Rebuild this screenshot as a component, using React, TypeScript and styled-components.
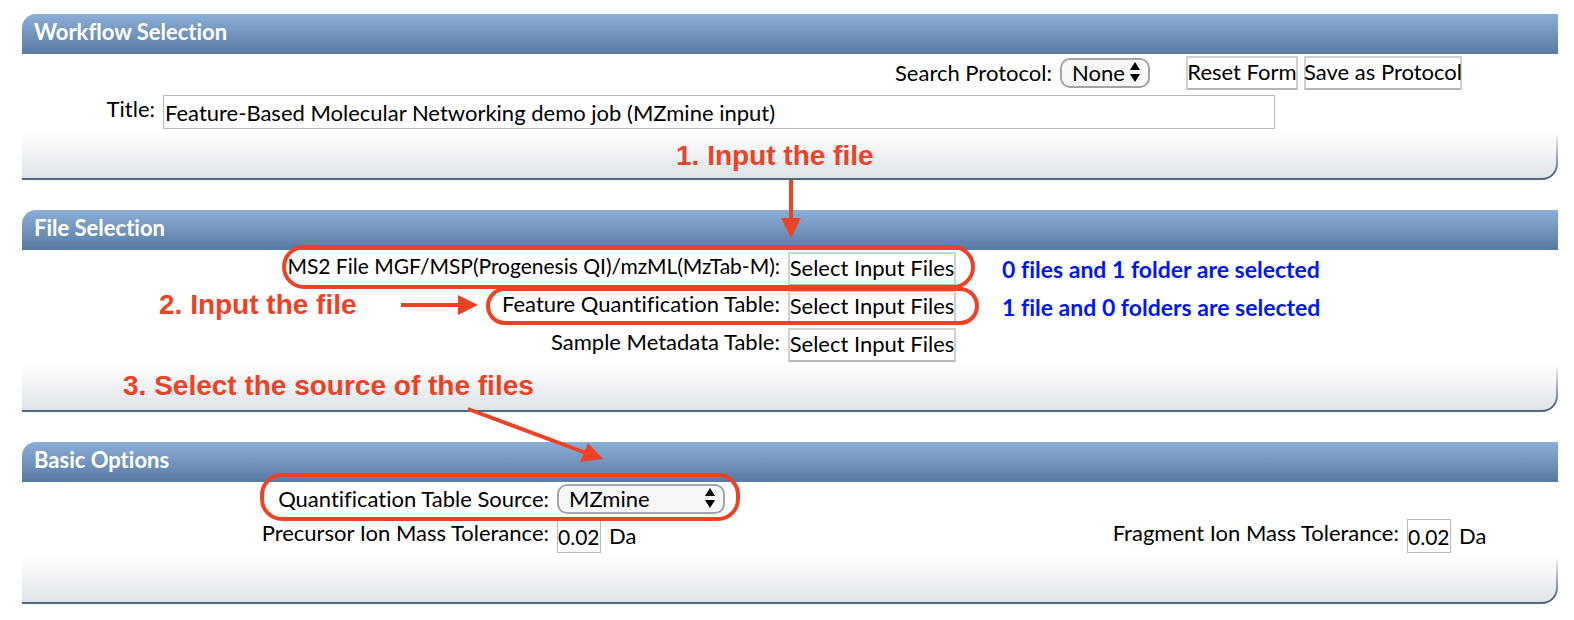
import React from "react";
import styled, { createGlobalStyle, css } from "styled-components";

const GlobalStyle = createGlobalStyle`
  *, *::before, *::after { box-sizing: border-box; }
  body {
    margin: 0;
    background: #fff;
    color: #000;
    font: 22px/28px "Trebuchet MS", Lato, "Open Sans", sans-serif;
    font-variant-ligatures: none;
  }
`;

const red = "#ee4226";

const Page = styled.main`
  display: flex;
  flex-direction: column;
  gap: 30px;
  padding: 14px 16px 16px 22px;
`;

const Panel = styled.section`
  display: flex;
  flex-direction: column;
`;

const PanelTitle = styled.h2`
  margin: 0;
  height: 40px;
  padding: 4px 12px 8px;
  border-top-left-radius: 14px;
  background: linear-gradient(#8cafd7, #597aa3);
  color: #fff;
  font-size: 22px;
  line-height: 28px;
  font-weight: 700;
`;

const PanelFoot = styled.div`
  height: 48px;
  border: 0 solid transparent;
  border-width: 0 2px 2px 0;
  border-bottom-right-radius: 16px;
  background:
    linear-gradient(#fff, #dfe4e9) padding-box,
    linear-gradient(#fff, #4f6983 90%) border-box;
`;

const Toolbar = styled.div`
  display: flex;
  align-items: center;
  justify-content: flex-end;
  gap: 8px;
  height: 38px;
  padding-right: 96px;
`;

const ToolbarButtons = styled.div`
  display: flex;
  gap: 6px;
  margin-left: 28px;
`;

const TitleRow = styled.div`
  display: grid;
  grid-template-columns: 133px minmax(0, 1fr);
  column-gap: 8px;
  align-items: center;
  height: 40px;
  padding-right: 283px;
`;

const FileRow = styled.div`
  display: grid;
  grid-template-columns: minmax(0, 758fr) minmax(0, 770fr);
  column-gap: 8px;
  align-items: center;
  height: 38px;
`;

const OptionRow = styled.div<{ $height: number }>`
  display: grid;
  grid-template-columns: minmax(0, 527fr) minmax(0, 180fr) minmax(0, 654fr) minmax(0, 151fr);
  column-gap: 8px;
  align-items: center;
  height: ${(p) => p.$height}px;
`;

const Label = styled.label<{ $raised?: boolean; $long?: boolean }>`
  display: flex;
  justify-content: flex-end;
  white-space: nowrap;
  ${(p) => p.$raised && css`padding-bottom: 6px;`}
  ${(p) => p.$long && css`font-size: 21px;`}
`;

const Cell = styled.div`
  position: relative;
  display: flex;
  align-items: center;
  gap: 8px;
`;

const Button = styled.button<{ $width: number }>`
  width: ${(p) => p.$width}px;
  height: 34px;
  padding: 0 0 2px;
  border: 2px solid #d0d0d0;
  border-bottom-color: #b6b6b6;
  background: #fff;
  color: #000;
  font: inherit;
  font-variant-ligatures: none;
  white-space: nowrap;
  display: flex;
  align-items: center;
  justify-content: center;
`;

const TextInput = styled.input`
  width: 100%;
  height: 34px;
  padding: 0 1px;
  border: 1px solid #bbb;
  background: #fff;
  color: #000;
  font: inherit;
  font-variant-ligatures: none;
`;

const ShortInput = styled(TextInput)`
  width: 44px;
  padding: 0;
  font-size: 21px;
`;

const SelectBox = styled.span<{ $width: number }>`
  position: relative;
  display: flex;
  width: ${(p) => p.$width}px;
`;

const SelectInput = styled.select`
  appearance: none;
  width: 100%;
  height: 30px;
  padding: 0 10px;
  border: 2px solid #a5a5a5;
  border-radius: 10px;
  background: #f7f7f7;
  color: #000;
  font: inherit;
  line-height: 26px;
`;

const SelectArrows = styled.svg`
  position: absolute;
  top: 4px;
  right: 10px;
  pointer-events: none;
`;

const Status = styled.strong`
  margin-left: 38px;
  color: #0018f5;
  font-size: 23px;
  white-space: nowrap;
`;

/* Callouts lie over the form and hang from the control they explain. */
const Ring = styled.span<{ $x: number; $y: number; $w: number; $h: number }>`
  position: absolute;
  z-index: 1;
  left: ${(p) => p.$x}px;
  top: ${(p) => p.$y}px;
  width: ${(p) => p.$w}px;
  height: ${(p) => p.$h}px;
  border: 4px solid ${red};
  border-radius: 22px;
  pointer-events: none;
`;

const Note = styled.span<{ $x: number; $y: number }>`
  position: absolute;
  z-index: 1;
  left: ${(p) => p.$x}px;
  top: ${(p) => p.$y}px;
  color: ${red};
  font: 700 28px/32px Helvetica, "Liberation Sans", sans-serif;
  white-space: nowrap;
  pointer-events: none;
`;

const ArrowSvg = styled.svg<{ $x: number; $y: number }>`
  position: absolute;
  z-index: 1;
  left: ${(p) => p.$x}px;
  top: ${(p) => p.$y}px;
  pointer-events: none;
`;

function Select({ id, width, value }: { id: string; width: number; value: string }) {
  return (
    <SelectBox $width={width}>
      <SelectInput id={id} defaultValue={value}>
        <option>{value}</option>
      </SelectInput>
      <SelectArrows width="10" height="20" aria-hidden="true">
        <path d="M5 0 10 8H0zM5 20 0 12H10z" fill="#000" />
      </SelectArrows>
    </SelectBox>
  );
}

export default function App() {
  return (
    <>
      <GlobalStyle />
      <Page>
        <Panel>
          <PanelTitle>Workflow Selection</PanelTitle>
          <Toolbar>
            <Label htmlFor="protocol">Search Protocol:</Label>
            <Select id="protocol" width={90} value="None" />
            <ToolbarButtons>
              <Button type="button" $width={112}>Reset Form</Button>
              <Button type="button" $width={158}>Save as Protocol</Button>
            </ToolbarButtons>
          </Toolbar>
          <TitleRow>
            <Label htmlFor="title" $raised>Title:</Label>
            <TextInput id="title" defaultValue="Feature-Based Molecular Networking demo job (MZmine input)" />
          </TitleRow>
          <PanelFoot />
        </Panel>

        <Panel>
          <PanelTitle>File Selection</PanelTitle>
          <FileRow>
            <Label htmlFor="ms2" $raised $long>MS2 File MGF/MSP(Progenesis QI)/mzML(MzTab-M):</Label>
            <Cell>
              <Button id="ms2" type="button" $width={168}>Select Input Files</Button>
              <Status>0 files and 1 folder are selected</Status>
              <Ring $x={-506} $y={-7} $w={693} $h={44} />
              <Note $x={-112} $y={-112}>1. Input the file</Note>
              <ArrowSvg $x={-7} $y={-72} width="20" height="60" aria-hidden="true">
                <path d="M8 0h4v38h8L10 58 0 38h8z" fill={red} />
              </ArrowSvg>
            </Cell>
          </FileRow>
          <FileRow>
            <Label htmlFor="quant" $raised>Feature Quantification Table:</Label>
            <Cell>
              <Button id="quant" type="button" $width={168}>Select Input Files</Button>
              <Status>1 file and 0 folders are selected</Status>
              <Ring $x={-302} $y={-3} $w={493} $h={38} />
              <Note $x={-629} $y={-1}>2. Input the file</Note>
              <ArrowSvg $x={-387} $y={5} width="78" height="20" aria-hidden="true">
                <path d="M0 8h57V0l20 10-20 10v-8H0z" fill={red} />
              </ArrowSvg>
            </Cell>
          </FileRow>
          <FileRow>
            <Label htmlFor="meta" $raised>Sample Metadata Table:</Label>
            <Cell>
              <Button id="meta" type="button" $width={168}>Select Input Files</Button>
            </Cell>
          </FileRow>
          <PanelFoot />
        </Panel>

        <Panel>
          <PanelTitle>Basic Options</PanelTitle>
          <OptionRow $height={34}>
            <Label htmlFor="source">Quantification Table Source:</Label>
            <Cell>
              <Select id="source" width={168} value="MZmine" />
              <Ring $x={-297} $y={-11} $w={480} $h={48} />
              <Note $x={-434} $y={-114}>3. Select the source of the files</Note>
              <ArrowSvg $x={-90} $y={-77} width="140" height="60" aria-hidden="true">
                <path d="M1 2 119 46" stroke={red} strokeWidth="4" />
                <path d="M121 36 136 52 113 55z" fill={red} />
              </ArrowSvg>
            </Cell>
          </OptionRow>
          <OptionRow $height={40}>
            <Label htmlFor="precursor" $raised>Precursor Ion Mass Tolerance:</Label>
            <Cell>
              <ShortInput id="precursor" defaultValue="0.02" />
              <span>Da</span>
            </Cell>
            <Label htmlFor="fragment" $raised>Fragment Ion Mass Tolerance:</Label>
            <Cell>
              <ShortInput id="fragment" defaultValue="0.02" />
              <span>Da</span>
            </Cell>
          </OptionRow>
          <PanelFoot />
        </Panel>
      </Page>
    </>
  );
}
